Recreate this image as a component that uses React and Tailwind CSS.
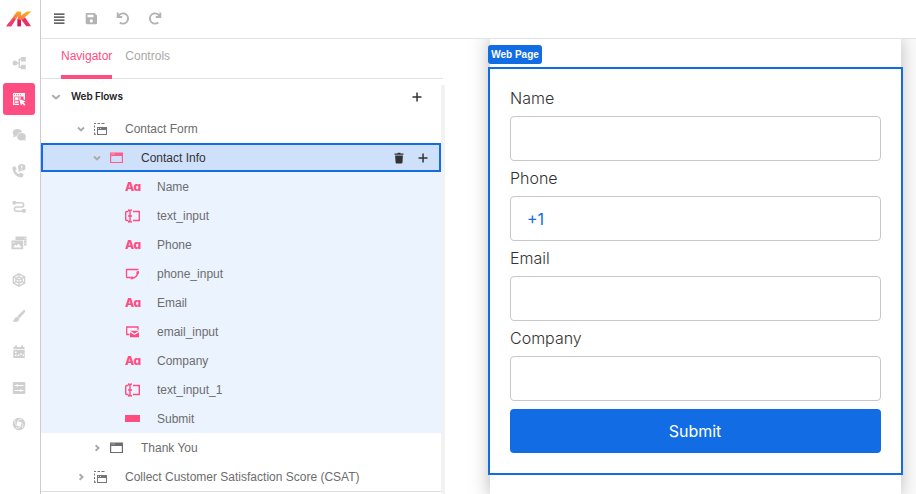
import React from 'react';

const ARIAL = "font-['Liberation_Sans',Arial,sans-serif]";

function Svg({ w = 16, h = 16, className = '', children }) {
  return (
    <svg width={w} height={h} viewBox={`0 0 ${w} ${h}`} fill="currentColor" className={`block shrink-0 ${className}`}>
      {children}
    </svg>
  );
}

function Logo() {
  return (
    <svg width="26" height="16" viewBox="0 0 26 16" className="block">
      <defs>
        <linearGradient id="brand" gradientUnits="userSpaceOnUse" x1="14" y1="0" x2="11" y2="16">
          <stop offset="0" stopColor="#ffae22" />
          <stop offset="0.45" stopColor="#fb7a3c" />
          <stop offset="1" stopColor="#f02a70" />
        </linearGradient>
      </defs>
      <path d="M.3 15.300L11 .5h4v5L12 8.500V5L5.200 15.300z" fill="url(#brand)" />
      <path d="M11.500 7.500L20.500.5h5L15 9.500v5.800h-3.500z" fill="url(#brand)" />
      <path d="M15.500 9l3.500-2.800 6 9.100h-4.700z" fill="#ec2f66" />
      <path d="M11.500 8l3.500 1.500v5.800h-3.500z" fill="#d91a5d" />
      <path d="M5 11l2.500-3.500 2 1L5.200 15.300H.3L2.500 12.300z" fill="#ee3a78" />
    </svg>
  );
}

const ACTIVE = 1;
const railIcons = [
  <Svg>
    <circle cx="4" cy="8" r="2.500" />
    <path d="M2 7.300h6v1.400H2z" />
    <path d="M10 2h4.800v4.500H10zM10 9.700h4.800v4.500H10z" />
    <path d="M10.500 4.200H8.300v8h2.200" fill="none" stroke="currentColor" strokeWidth="1.500" />
  </Svg>,
  <Svg>
    <path fillRule="evenodd" d="M2 2h12v7l-1.500-.7V5.500H3.300v7.200H8V14H2zM3 3.200v1h1v-1zm2 0v1h1v-1zm2 0v1h1v-1zm2 0v1h1v-1z" />
    <path d="M4 6.300h3.500v3H4zM4 10.200h3.500v1.700H4zM8.300 6.300h1.500v1.500H8.300z" />
    <path d="M8 8l6.500 2.300-2 1.200 2 2-1.300 1.200-2-2L10 14.500z" />
  </Svg>,
  <Svg>
    <path d="M6.500 2C3.500 2 1.700 3.700 1.700 5.800c0 1 .4 1.800 1 2.400L2 10.500l2.500-1 1 .1C5.800 7 8 5.200 11.200 5.200 10.600 3.200 8.800 2 6.500 2z" />
    <ellipse cx="10.500" cy="9.700" rx="4.300" ry="3.700" />
    <path d="M12 12l2.500 2.200-.3-4z" />
  </Svg>,
  <Svg>
    <path d="M1.700 4l2.300-1 1.700 3.200-1.400 1.200c.7 1.700 2 3 3.700 3.700l1.300-1.500 3.300 1.700-.8 2.400c-.2.600-.7.800-1.300.8C5.700 14.300 1.500 10 1.500 4.900c0-.4 0-.7.200-.9z" />
    <ellipse cx="10.800" cy="4.400" rx="3.700" ry="3.300" />
    <path d="M8 6l-.7 2.800 3-.8z" />
    <path d="M10.300 2.500h1v2.500h-1zM10.300 5.700h1v1h-1z" fill="#fff" />
  </Svg>,
  <Svg>
    <rect x="1.500" y="2" width="3.500" height="3.500" rx="1" />
    <rect x="11" y="10" width="3.800" height="3.800" rx="1" />
    <path d="M4 3.800h6.500a2 2 0 010 4.200h-5a2 2 0 000 4.200H12" fill="none" stroke="currentColor" strokeWidth="1.500" />
  </Svg>,
  <Svg>
    <path fillRule="evenodd" d="M4.500 1.500h11v9H13V5H4.500zM13.500 2.800v1h1v-1zm0 2.400v1h1v-1zm0 2.500v1h1v-1z" />
    <path fillRule="evenodd" d="M.5 5.500h11.700v8.700H.5zM2 12.500h8.700L7.500 8.800l-2 2-1.200-1zM2.200 7v1.300h1.300V7z" />
  </Svg>,
  <Svg>
    <g fill="none" stroke="currentColor" strokeWidth="1.400">
      <path d="M8 1.800l5.600 3v6.400l-5.600 3-5.600-3V4.800z" />
      <path d="M8 4.800l3 1.600v3.200l-3 1.600-3-1.600V6.400zM5 6.400l3 1.600 3-1.600M8 8v6M8 2v3M2.500 5L5 6.400M13.500 5L11 6.400M2.500 11L5 9.600M13.500 11L11 9.600" />
    </g>
  </Svg>,
  <Svg>
    <path d="M14 2.100c-.7-.4-1.400 0-2 .5L6.300 8.200l2 2.200 5.300-5.800c.6-.8 1-1.900.4-2.500z" />
    <path d="M5.700 8.900c1.600.3 2.500 1.300 2.400 2.600-.2 2.500-4.200 3.300-6.600 1.200 2-.2 1.800-3.600 4.200-3.800z" />
  </Svg>,
  <Svg>
    <path d="M4 1.500h2V3h4V1.500h2V3h1.500v2.200h-11V3H4z" />
    <path fillRule="evenodd" d="M2.300 6h11.400v8H2.300zM4 7.500V9h1.500V7.500zm5.200 2V11h1.500V9.500zM4 10.500V12h1.500v-1.500zm2.700 0V12h1.500v-1.500zm5 0V12H13v-1.500z" />
  </Svg>,
  <Svg>
    <rect x="1.800" y="2" width="12.500" height="12" rx="1" />
    <path d="M3.500 5.500h9M3.500 10.500h9" stroke="#fff" strokeWidth="1" />
    <path d="M6.500 3.800v3.400l-1.800-1.700zM9.500 8.800v3.400l1.800-1.700z" fill="#fff" />
  </Svg>,
  <Svg>
    <circle cx="8" cy="8" r="4.300" fill="none" stroke="currentColor" strokeWidth="3.800" />
    <path d="M6 6Q7 3 11 3M10 6Q13 8 11.500 12M10 10Q8 13 4.500 12M6 10Q3 8 4 4" fill="none" stroke="#fff" strokeWidth=".7" />
  </Svg>,
];

function Rail() {
  return (
    <nav className="flex w-[41px] shrink-0 flex-col border-r border-[#cfcccf] pl-[3px]">
      <div className="flex h-[47px] items-start pt-[11px] pl-[3px]"><Logo /></div>
      <div className="flex flex-col gap-[4.1px]">
        {railIcons.map((icon, i) => (
          <div key={i} className={`flex h-8 w-8 items-center justify-center rounded-[3px] ${i === ACTIVE ? 'bg-[#ff4d82] text-white' : 'text-[#d0d0d0]'}`}>
            {icon}
          </div>
        ))}
      </div>
    </nav>
  );
}

function Toolbar() {
  return (
    <header className="flex h-[39px] shrink-0 items-center border-b border-[#e2e2e2] pl-[10px] text-[#b3b3b3]">
      <Svg className="mr-4 text-[#333]"><path d="M3 3h10.500v1.200H3zM3 6h10.500v1.200H3zM3 9h10.500v1.200H3zM3 12h10.500v1.200H3z" transform="translate(0 -.5)" /></Svg>
      <Svg className="mr-4"><path fillRule="evenodd" d="M4 2h7.500L14 4.500V12c0 .8-.5 1.200-1.200 1.200H4c-.8 0-1.300-.5-1.300-1.200V3.300C2.700 2.500 3.200 2 4 2zM4.500 3.700v2.500h6V3.700zm3.800 4.600a1.600 1.600 0 100 3.200 1.600 1.600 0 000-3.200z" /></Svg>
      <Svg className="mr-4"><path d="M2.700 1.500V6h4.500M3.200 5.700A5.100 5.100 0 118 12.600c-1.300 0-2.300-.3-3.300-1.100" fill="none" stroke="currentColor" strokeWidth="1.900" /></Svg>
      <Svg><path d="M13.300 1.500V6H8.800M12.800 5.700A5.100 5.100 0 108 12.600c1.300 0 2.300-.3 3.300-1.100" fill="none" stroke="currentColor" strokeWidth="1.900" /></Svg>
    </header>
  );
}

function Chevron({ open, big }) {
  const d = open ? (big ? 'M1.300 3.200L5 6.500l3.700-3.300' : 'M2 3.500l3 3 3-3') : 'M3.600 2.200l3 2.800-3 2.800';
  return <Svg w={10} h={10} className="text-[#aaa]"><path d={d} fill="none" stroke="currentColor" strokeWidth="1.900" /></Svg>;
}

function Plus() {
  return <Svg w={10} h={10} className="text-[#333]"><path d="M4.300.5h1.500v3.800h3.700v1.500H5.800v3.700H4.300V5.800H.5V4.300h3.800z" /></Svg>;
}

const nodeIcons = {
  flow: (
    <Svg w={14} h={14} className="text-[#757575]">
      <path d="M0 1.500h2M3.500 1.500h2.500M7.500 1.500h3M.5 3.500v2M.5 7v2M.5 10.500v2M0 12.300h2" stroke="currentColor" strokeWidth="1.100" />
      <path fillRule="evenodd" d="M3 5h10v8H3zM4 8v4h8V8z" />
      <path d="M4 6.500h1M6 6.500h1" stroke="#fff" strokeWidth=".8" />
    </Svg>
  ),
  page: (
    <Svg w={14} h={14}>
      <path fillRule="evenodd" d="M0 1.500h13V12H0zM1.200 5v6h10.600V5z" />
      <path d="M1.500 3h1M3.500 3h1" stroke="#fff" strokeWidth=".8" />
    </Svg>
  ),
  label: (
    <span className="mt-px block font-[Inter,sans-serif] text-[12px] leading-[14px] font-extrabold tracking-[-0.3px] [font-feature-settings:'cv11']">Aa</span>
  ),
  text: (
    <Svg w={16} h={14}>
      <path d="M3.500 2.500H1.500Q.7 2.500.7 3.500v7q0 1 .8 1h2M8 2.500h6.300v9H8M3 1Q5 1 5 2.500v9Q5 13 3 13M7 1Q5 1 5 2.500v9Q5 13 7 13M3 7h4" fill="none" stroke="currentColor" strokeWidth="1.400" />
    </Svg>
  ),
  phone: (
    <Svg w={16} h={14}>
      <path d="M5.500 10.500H2Q1.500 10.500 1.500 10V2.500h12" fill="none" stroke="currentColor" strokeWidth="1.300" />
      <path d="M7 11.200q5.500-.7 5.700-6.500" fill="none" stroke="currentColor" strokeWidth="1.400" />
      <path d="M11.500 4.500L14 4v2.500l-1.300 1.200-1.200-1zM5.500 9.800l2-.3 1.200 1.300-1.200 1.500h-2z" />
    </Svg>
  ),
  email: (
    <Svg w={16} h={14}>
      <path d="M4.500 9.500H1.700V2H13v2.800" fill="none" stroke="currentColor" strokeWidth="1.300" />
      <path d="M5 5.800h9L9.500 8.500zM5 7.200l4.500 2.700L14 7.200v5H5z" />
    </Svg>
  ),
  button: <span className="block h-[7px] w-[15px] bg-[#ff4d82]" />,
};

const tree = [
  { icon: 'label', text: 'Name' },
  { icon: 'text', text: 'text_input' },
  { icon: 'label', text: 'Phone' },
  { icon: 'phone', text: 'phone_input' },
  { icon: 'label', text: 'Email' },
  { icon: 'email', text: 'email_input' },
  { icon: 'label', text: 'Company' },
  { icon: 'text', text: 'text_input_1' },
  { icon: 'button', text: 'Submit' },
];

function Row({ icon, text, open, className = '' }) {
  return (
    <div className={`flex h-[29px] items-center ${className}`}>
      <Chevron open={open} />
      <div className="ml-2 w-[31px]">{nodeIcons[icon]}</div>
      <span>{text}</span>
    </div>
  );
}

function Navigator() {
  return (
    <aside className={`flex w-[404px] shrink-0 flex-col text-[12px] text-[#6d6d6d] ${ARIAL}`}>
      <div className="flex h-10 w-[402px] shrink-0 gap-[13px] border-b border-[#e2e2e2] pl-5 leading-[34px]">
        <div className="h-10 border-b-4 border-[#ff4d82] text-[#ff4d82]">Navigator</div>
        <div className="text-[#a8a8a8]">Controls</div>
      </div>
      <div className="flex grow">
        <div className="w-[400px]">
          <div className="flex h-[35px] items-center pl-[10px]">
            <Chevron open big />
            <span className="ml-[10px] grow font-[Inter,sans-serif] text-[10px] font-semibold tracking-[-0.1px] text-[#222]">Web Flows</span>
            <div className="mr-[19px]"><Plus /></div>
          </div>
          <Row icon="flow" text="Contact Form" open className="pl-[35px]" />
          <div className="flex h-[29px] items-center border-2 border-[#126ce4] bg-[#cfe1fa] pr-[11px] pl-[49px] text-[#333]">
            <Chevron open />
            <div className="ml-2 w-[31px] text-[#ff5c8d]">{nodeIcons.page}</div>
            <span className="grow">Contact Info</span>
            <Svg w={10} h={12} className="mr-[14px] text-[#333]"><path d="M.5 1.500h2.700l.6-.8h2.400l.6.800h2.700v1.200h-9zM1.100 3.400h7.800l-.4 7.100c0 .5-.4.900-.9.900H2.500c-.5 0-.9-.4-.9-.9z" /></Svg>
            <Plus />
          </div>
          <div className="bg-[#ebf3ff]">
            {tree.map((n) => (
              <div key={n.text} className="flex h-[29px] items-center pl-[84px]">
                <div className="w-8 text-[#ff4d82]">{nodeIcons[n.icon]}</div>
                <span>{n.text}</span>
              </div>
            ))}
          </div>
          <Row icon="page" text="Thank You" className="pl-[51px]" />
          <div className="border-b border-[#dedede]">
            <Row icon="flow" text="Collect Customer Satisfaction Score (CSAT)" className="pl-[35px]" />
          </div>
        </div>
        <div className="mt-[6px] w-1 bg-[#f2f2f2]" />
      </div>
    </aside>
  );
}

const fields = [
  { label: 'Name' },
  { label: 'Phone', value: '+1' },
  { label: 'Email' },
  { label: 'Company' },
];

function Canvas() {
  return (
    <main className="min-w-0 grow overflow-hidden bg-[linear-gradient(to_right,#ffffff_0px,#ffffff_20px,#fafafa_45px)] pl-[45px]">
      <div className="relative h-full w-[411px] bg-white px-5 pt-[49px] font-[Inter,sans-serif] text-[16px] text-[#333] shadow-[0_0_16px_rgba(0,0,0,0.25)]">
        <div className="pointer-events-none absolute top-[28px] -left-[2px] h-[408px] w-[415px] border-2 border-[#126ce4]" />
        <div className={`absolute top-[6px] -left-[2px] flex h-[19px] w-[54px] items-center justify-center rounded-[3px] bg-[#126ce4] text-[10px] font-bold whitespace-nowrap text-white ${ARIAL}`}>Web Page</div>
        {fields.map((f) => (
          <div key={f.label} className="h-20">
            <div className="mb-2 h-5 leading-5 font-light">{f.label}</div>
            <div className="flex h-[45px] items-center rounded-[4px] border border-[#c8c8c8] pl-4 text-[#126ce4]">{f.value}</div>
          </div>
        ))}
        <div className="mt-px flex h-11 items-center justify-center rounded-[4px] bg-[#126ce4] pr-px text-white">Submit</div>
      </div>
    </main>
  );
}

export default function App() {
  return (
    <div className="flex h-[494px] w-[916px] overflow-hidden bg-white">
      <Rail />
      <div className="flex min-w-0 grow flex-col">
        <Toolbar />
        <div className="flex min-h-0 grow">
          <Navigator />
          <Canvas />
        </div>
      </div>
    </div>
  );
}
